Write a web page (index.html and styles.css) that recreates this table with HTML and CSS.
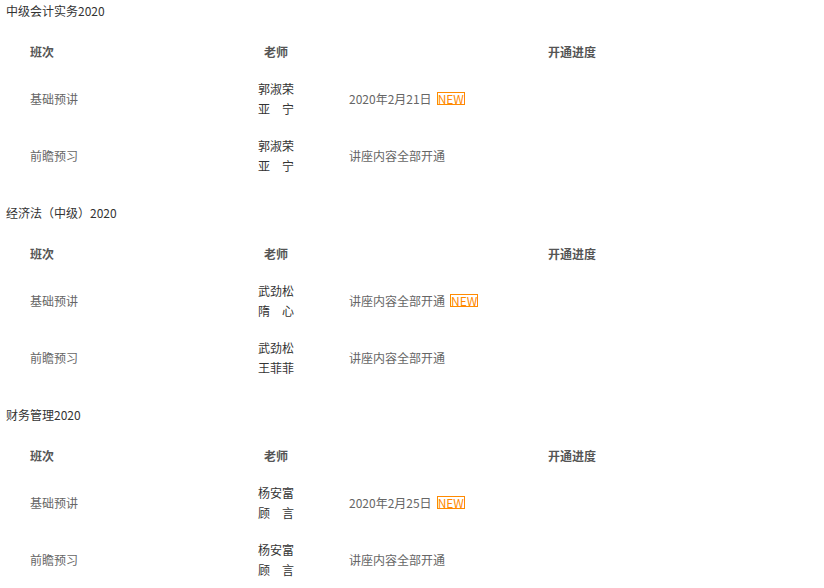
FILE: index.html
```html
<!DOCTYPE html>
<html lang="zh-CN">
<head>
<meta charset="utf-8">
<title>开通进度</title>
<link rel="stylesheet" href="styles.css">
</head>
<body>
<div class="course">
  <div class="course-title">中级会计实务2020</div>
  <div class="grid">
    <div class="cell head c1">班次</div>
    <div class="cell head c2">老师</div>
    <div class="cell head c3">开通进度</div>

    <div class="cell c1 plain">基础预讲</div>
    <div class="cell c2 teacher"><span>郭淑荣</span><span>亚　宁</span></div>
    <div class="cell c3 plain">2020年2月21日<span class="new">NEW</span></div>

    <div class="cell c1 plain">前瞻预习</div>
    <div class="cell c2 teacher"><span>郭淑荣</span><span>亚　宁</span></div>
    <div class="cell c3 plain">讲座内容全部开通</div>
  </div>
</div>

<div class="course">
  <div class="course-title">经济法（中级）2020</div>
  <div class="grid">
    <div class="cell head c1">班次</div>
    <div class="cell head c2">老师</div>
    <div class="cell head c3">开通进度</div>

    <div class="cell c1 plain">基础预讲</div>
    <div class="cell c2 teacher"><span>武劲松</span><span>隋　心</span></div>
    <div class="cell c3 plain">讲座内容全部开通<span class="new">NEW</span></div>

    <div class="cell c1 plain">前瞻预习</div>
    <div class="cell c2 teacher"><span>武劲松</span><span>王菲菲</span></div>
    <div class="cell c3 plain">讲座内容全部开通</div>
  </div>
</div>

<div class="course">
  <div class="course-title">财务管理2020</div>
  <div class="grid">
    <div class="cell head c1">班次</div>
    <div class="cell head c2">老师</div>
    <div class="cell head c3">开通进度</div>

    <div class="cell c1 plain">基础预讲</div>
    <div class="cell c2 teacher"><span>杨安富</span><span>顾　言</span></div>
    <div class="cell c3 plain">2020年2月25日<span class="new">NEW</span></div>

    <div class="cell c1 plain">前瞻预习</div>
    <div class="cell c2 teacher"><span>杨安富</span><span>顾　言</span></div>
    <div class="cell c3 plain">讲座内容全部开通</div>
  </div>
</div>
</body>
</html>
```

FILE: styles.css
```css
html, body {
  margin: 0;
  padding: 0;
  background: #fff;
}
body {
  font-family: "Noto Sans CJK SC", "Microsoft YaHei", sans-serif;
  font-size: 12px;
  color: #333;
  padding-left: 6px;
}
.course {
  margin-bottom: 18px;
}
.course-title {
  height: 22px;
  line-height: 22px;
  color: #333;
}
.grid {
  margin-top: 11px;
  display: grid;
  grid-template-columns: 197px 146px 446px;
  grid-auto-rows: 57px;
  grid-template-rows: 37px;
}
.cell {
  display: flex;
  align-items: center;
}
.c1 {
  padding-left: 24px;
}
.c2 {
  justify-content: center;
}
.head {
  font-weight: bold;
  color: #555;
}
.head.c3 {
  justify-content: center;
}
.plain {
  color: #666;
}
.teacher {
  flex-direction: column;
  justify-content: center;
  line-height: 20px;
  color: #333;
}
.new {
  display: inline-block;
  margin-left: 5px;
  border: 1px solid #ff8a00;
  color: #ff8a00;
  line-height: 11px;
  height: 11px;
  padding: 0 0px;
  font-size: 12px;
}
```
